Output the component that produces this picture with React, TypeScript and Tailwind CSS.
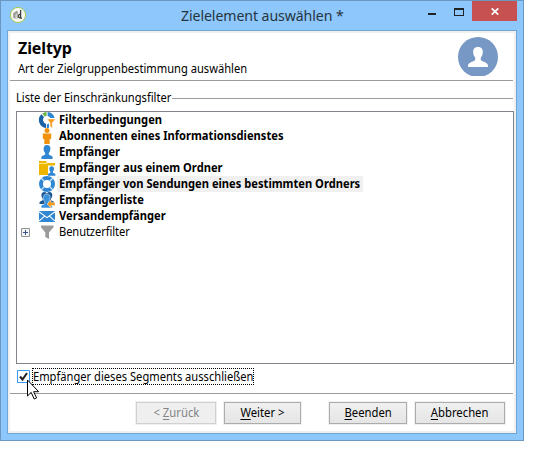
import type { ReactNode } from "react";

const ring = "M8 0a8 8 0 1 0 0 16A8 8 0 0 0 8 0Zm0 4a4 4 0 1 1 0 8 4 4 0 0 1 0-8Z";
const bust = "M8 1c2.4 0 3.5 1.6 3.4 3.8 0 1.8-.7 3.3-1.6 4.1v1.4c.3 1 3.4 1.3 3.8 2.8V15H2.4v-1.9c.4-1.5 3.5-1.8 3.8-2.8V8.9c-.9-.8-1.6-2.3-1.6-4.1C4.6 2.6 5.7 1 8 1Z";

const FilterIcon = () => (
  <>
    <path d="M2.4 2.2 5 5a4.4 4.4 0 0 0 2 7v4A8 8 0 0 1 2.4 2.2Z" fill="#1d62a5" />
    <path d="m3.2 1.6 2.6 3A4 4 0 0 1 7.6 4V0a8 8 0 0 0-4.4 1.6Z" fill="#6cb544" />
    <path d="M8.6 0A8 8 0 0 1 15.6 6h-4.2a4 4 0 0 0-2.8-2Z" fill="#2f86d2" />
    <path d="M7.8 12.2a4 4 0 0 0 2.2-.6v4.1a8 8 0 0 1-2.2.3Z" fill="#2f86d2" />
    <path d="M8 7h8.5l-3.2 3.8V16l-2.2-1.3v-3.9Z" fill="#f39a18" stroke="#fff" strokeWidth=".5" />
  </>
);
const PersonIcon = () => (
  <g fill="#f0920e"><circle cx="8" cy="2.5" r="2.5" /><path d="M3.8 5.5h8.4V11h-1.5v5H5.3v-5H3.8Z" /></g>
);
const BustIcon = () => <path d={bust} fill="#2f86d2" />;
const FolderIcon = () => (
  <>
    <path d="M0 1h7.5v2H16v12H0Z" fill="#edb600" />
    <path d="M0 3.5h8" stroke="#fff4bd" strokeWidth=".8" />
    <path d="M9 5.5h7V16H9Z" fill="#fff" />
    <path d={bust} transform="translate(7.2 5.5) scale(.68)" fill="#2f86d2" />
  </>
);
const RingIcon = () => (
  <><path d={ring} fill="#2f86d2" fillRule="evenodd" /><path d="m2 2 3 3m6 6 3 3m0-12-3 3m-6 6-3 3" stroke="#d5eaf9" strokeWidth="1.1" /></>
);
const GroupIcon = () => (
  <>
    <path d={bust} transform="translate(-1.5 -.8) scale(.85)" fill="#1d5794" />
    <path d={bust} transform="translate(3.6 -.8) scale(.85)" fill="#1d5794" />
    <path d={bust} transform="translate(-.3 1)" fill="#3a91dc" stroke="#fff" strokeWidth=".5" />
    <path d="m8 12 4-4v2.6h4v2.8h-4V16Z" fill="#f39a18" stroke="#fff" strokeWidth=".4" />
  </>
);
const MailIcon = () => (
  <><path d="M0 3h16v11H0Z" fill="#2f86d2" /><path d="m0 3.8 8 5.8 8-5.8M0 13.2l5.5-5m10.5 5-5.5-5" fill="none" stroke="#fff" strokeWidth="1.1" /></>
);
const FunnelIcon = () => <path d="M2 1.5h12.5v1.7L10 8.5V15l-3.7-2V8.5L2 3.2Z" fill="#9b9b9b" />;

const rows: { label: string; icon: ReactNode; look: string }[] = [
  { label: "Filterbedingungen", icon: <FilterIcon />, look: "w-[106px]" },
  { label: "Abonnenten eines Informationsdienstes", icon: <PersonIcon />, look: "w-[226px]" },
  { label: "Empfänger", icon: <BustIcon />, look: "w-[65px]" },
  { label: "Empfänger aus einem Ordner", icon: <FolderIcon />, look: "w-[167px]" },
  { label: "Empfänger von Sendungen eines bestimmten Ordners", icon: <RingIcon />, look: "w-[306px] bg-[#f0f0f0]" },
  { label: "Empfängerliste", icon: <GroupIcon />, look: "w-[88px]" },
  { label: "Versandempfänger", icon: <MailIcon />, look: "w-[111px]" },
];

// Slightly condensed text, anchored at its left edge.
const Narrow = ({ children }: { children: ReactNode }) => (
  <span className="inline-block origin-left scale-x-[0.929] whitespace-nowrap">{children}</span>
);

function Push({ first, rest, before = "", look }: { first: string; rest: string; before?: string; look: string }) {
  return (
    <button className={`h-[22px] border text-center text-[12px] leading-[20px] whitespace-pre outline outline-1 outline-[#f0f0f0] ${look}`}>
      <span className="inline-block scale-x-[0.94]">{before}<span className="underline underline-offset-2">{first}</span>{rest}</span>
    </button>
  );
}

export default function App() {
  return (
    <div className="h-[461px] w-[543px] overflow-hidden bg-white font-['Noto_Sans',sans-serif] text-[12px] text-black">
      <div className="relative flex h-[441px] w-[524px] flex-col border border-[#6b98c1] bg-[#8dc7fb] px-[6px] pb-[6px]">
        <header className="flex h-[29px] shrink-0 items-start">
          <svg className="mt-[5px] ml-[2px] h-[18px] w-[18px]" viewBox="0 0 18 18">
            <circle cx="9" cy="9" r="7.6" fill="#f7f8f2" stroke="#a9c951" strokeWidth="1" />
            <path d="m4.2 7.2 3.6-2.4 1 .6v7l-1.2.4V7.5l-1 .4v5l-2.4-1.2Z" fill="#9a9b96" />
            <path d="M11.6 4v7.8M11 8.2c-1.8.2-2 3-.6 3.4l2.6.8" fill="none" stroke="#3f423e" strokeWidth="1.3" />
          </svg>
          <h1 className="ml-[154px] flex-1 text-[15px] leading-[28px] whitespace-nowrap text-[#26343f]"><span className="inline-block origin-left scale-x-[0.943] tracking-[-0.1px]">Zielelement auswählen *</span></h1>
          <svg className="h-5 w-[50px] shrink-0" viewBox="0 0 50 20"><path d="M6 12h8v2H6Z" fill="#1e2327" /><path d="M32 7h10v8H32Zm1 2v5h8V9Z" fill="#1e2327" fillRule="evenodd" /></svg>
          <div className="flex h-5 w-[45px] shrink-0 items-center justify-center bg-[#c75050]">
            <svg className="h-[7px] w-2" viewBox="0 0 8 7"><path d="m.7.4 6.6 6.2m0-6.2L.7 6.6" stroke="#fff" strokeWidth="1.7" /></svg>
          </div>
        </header>
        <main className="flex h-[404px] w-[510px] flex-col border border-[#71a5d3] bg-white outline-2 -outline-offset-3 outline-[#f0f0f0]">
          <section className="mx-[2px] mt-[2px] flex h-[48px] w-[503px] shrink-0 justify-between border-b border-[#9b9b9b] pr-[15px] pl-2">
            <div>
              <h2 className="mt-[5px] text-[16px] leading-[20px] font-bold tracking-[-0.1px]">Zieltyp</h2>
              <p className="mt-[2px] leading-[18px]"><Narrow>Art der Zielgruppenbestimmung auswählen</Narrow></p>
            </div>
            <svg className="mt-1 h-[39px] w-10 shrink-0" viewBox="0 0 40 39"><circle cx="20" cy="20" r="20" fill="#7797c4" /><path d="M20 10c3.6 0 5 2.2 4.8 5.4-.1 2.2-.9 4-2 5v2.3c.5 2 7.2 2.3 7.2 5.8V30H10v-1.5c0-3.5 6.7-3.8 7.2-5.8v-2.3c-1.1-1-1.9-2.8-2-5C15 12.2 16.4 10 20 10Z" fill="#fff" /></svg>
          </section>
          <div className="mt-[8px] ml-2 flex h-[18px] w-[497px] shrink-0 items-center"><span className="w-[156px] shrink-0 leading-[18px]"><Narrow>Liste der Einschränkungsfilter</Narrow></span><i className="h-px flex-1 bg-[#9b9b9b]" /></div>
          <div className="mt-[4px] ml-2 h-[253px] w-[498px] shrink-0 border border-[#7f858b] bg-white">
            {rows.map((row) => (
              <div key={row.label} className="flex h-4 items-center pl-[22px]">
                <svg className="h-4 w-4 shrink-0 overflow-visible" viewBox="0 0 16 16">{row.icon}</svg>
                <span className={`ml-[2px] h-4 pl-[2px] leading-[15px] font-bold ${row.look}`}><Narrow>{row.label}</Narrow></span>
              </div>
            ))}
            <div className="flex h-4 items-center pl-[4px]">
              <svg className="h-[9px] w-[9px]" viewBox="0 0 9 9"><path d="M.5.5h8v8h-8Z" fill="#f6f6f6" stroke="#929292" /><path d="M2 4.5h5M4.5 2v5" stroke="#39518c" /></svg>
              <svg className="ml-[9px] h-4 w-4" viewBox="0 0 16 16"><FunnelIcon /></svg>
              <span className="ml-1 h-4 leading-[15px] tracking-[-0.1px]"><Narrow>Benutzerfilter</Narrow></span>
            </div>
          </div>
          <div className="mt-1 ml-[9px] flex h-[17px] shrink-0 items-center">
            <svg className="h-[13px] w-[13px]" viewBox="0 0 13 13"><path d="M.5.5h12v12H.5Z" fill="#fff" stroke="#3399ff" /><path d="m3 6.5 2.5 3L10 3" fill="none" stroke="#222" strokeWidth="2" /></svg>
            <span className="ml-[2px] h-[17px] w-[222px] border border-dotted border-black leading-[15px]"><Narrow>Empfänger dieses Segments ausschließen</Narrow></span>
          </div>
          <footer className="mt-2 ml-[2px] flex w-[503px] border-t border-[#9b9b9b] pt-2 pl-[126px]">
            <Push before="< " first="Z" rest="urück" look="w-[80px] border-[#d0d0d0] bg-[#efefef] text-[#838383]" />
            <Push first="W" rest="eiter >" look="ml-2 w-[77px] border-[#acacac] bg-linear-to-b from-[#f0f0f0] to-[#e5e5e5]" />
            <Push first="B" rest="eenden" look="ml-7 w-[78px] border-[#acacac] bg-linear-to-b from-[#f0f0f0] to-[#e5e5e5]" />
            <Push first="A" rest="bbrechen" look="ml-2 w-[90px] border-[#acacac] bg-linear-to-b from-[#f0f0f0] to-[#e5e5e5]" />
          </footer>
        </main>
        <svg className="absolute top-[378px] left-[26px] h-[22px] w-[14px]" viewBox="0 0 14 22"><path d="M.5 1v16l3.7-3.6 3 6.6 2.4-1.1-3-6.2h5.1Z" fill="#fff" stroke="#000" /></svg>
      </div>
    </div>
  );
}
